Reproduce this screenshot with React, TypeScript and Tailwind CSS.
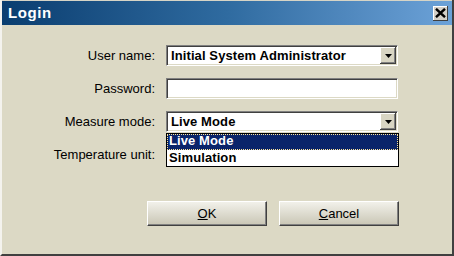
import React from 'react';

const sunken =
  'border border-t-[#808080] border-l-[#808080] border-b-white border-r-white shadow-[inset_1px_1px_0_#404040,inset_-1px_-1px_0_#dcd9c5] bg-white';

function Arrow() {
  return (
    <div className="w-[16px] h-[17px] bg-[#d8d5c3] flex items-center justify-center shadow-[inset_-1px_-1px_0_#404040,inset_1px_1px_0_#fff,inset_-2px_-2px_0_#808080]">
      <svg width="7" height="4" viewBox="0 0 7 4">
        <path d="M0 0h7L3.5 4z" fill="#000" />
      </svg>
    </div>
  );
}

function Combo({ value, children }: { value: string; children?: React.ReactNode }) {
  return (
    <div className={`relative h-[21px] w-[232px] flex items-center justify-between pl-[4px] pr-[1px] ${sunken}`}>
      <span className="font-bold text-[13px] tracking-[0.1px] text-black">{value}</span>
      <Arrow />
      {children}
    </div>
  );
}

function Btn({ label, accel }: { label: string; accel: string }) {
  return (
    <button className="w-[120px] h-[25px] text-[13px] text-black bg-gradient-to-b from-[#f2f1ea] to-[#c9c6b5] border border-t-white border-l-white border-b-[#404040] border-r-[#404040] shadow-[inset_-1px_-1px_0_#808080]">
      <span className="underline">{accel}</span>
      {label}
    </button>
  );
}

export default function App() {
  return (
    <div
      className="w-[454px] h-[256px] bg-[#dcd9c5] flex flex-col border-l-2 border-l-[#f4f3ee] border-r-2 border-r-[#404040] border-b-2 border-b-[#404040] overflow-hidden"
      style={{ fontFamily: '"Liberation Sans", Arial, sans-serif' }}
    >
      <div className="h-[25px] shrink-0 flex items-center justify-between pl-[6px] pr-[4px] border-t border-t-[#d6d4c6] bg-gradient-to-r from-[#0a3e70] via-[#2f6ba0] to-[#6ca2d8]">
        <span className="text-white font-bold text-[15px] tracking-[0.6px]">Login</span>
        <div className="w-[15px] h-[15px] bg-[#d4d0c8] flex items-center justify-center shadow-[inset_-1px_-1px_0_#404040,inset_1px_1px_0_#fff]">
          <svg width="11" height="10" viewBox="0 0 11 10">
            <path d="M1 0.8L10 9.2M10 0.8L1 9.2" stroke="#000" strokeWidth="2.4" />
          </svg>
        </div>
      </div>

      <div className="flex flex-col pt-[20px]">
        <div className="grid grid-cols-[153px_232px] gap-x-[11px] gap-y-[12px] items-center text-[13px] text-black">
          <span className="text-right">User name:</span>
          <Combo value="Initial System Administrator" />

          <span className="text-right">Password:</span>
          <div className={`h-[21px] w-[232px] ${sunken}`} />

          <span className="text-right">Measure mode:</span>
          <div className="relative z-10">
            <Combo value="Live Mode" />
            <div className="absolute left-0 top-[22px] w-[233px] h-[34px] bg-white border border-black flex flex-col">
              <div className="h-[16px] bg-[#0a246a] text-white font-bold text-[13px] tracking-[0.1px] leading-[14px] pl-[2px] outline-1 outline-dotted outline-[#ffe79c] -outline-offset-1">
                Live Mode
              </div>
              <div className="h-[16px] text-black font-bold text-[13px] tracking-[0.1px] leading-[16px] pl-[2px]">Simulation</div>
            </div>
          </div>

          <span className="text-right">Temperature unit:</span>
          <Combo value="" />
        </div>

        <div className="flex gap-[12px] pl-[145px] mt-[36px]">
          <Btn accel="O" label="K" />
          <Btn accel="C" label="ancel" />
        </div>
      </div>
    </div>
  );
}
